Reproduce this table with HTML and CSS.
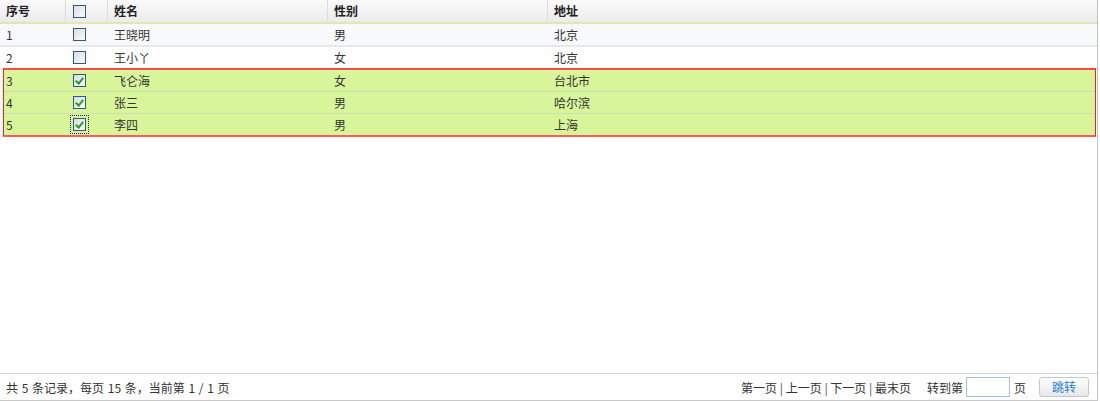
FILE: index.html
```html
<!DOCTYPE html>
<html lang="zh-CN">
<head>
<meta charset="utf-8">
<title>列表</title>
<link rel="stylesheet" href="styles.css">
</head>
<body>
<div class="panel">
  <div class="grid">
    <div class="row head">
      <div class="cell">序号</div>
      <div class="cell cb-cell"><span class="cb"></span></div>
      <div class="cell">姓名</div>
      <div class="cell">性别</div>
      <div class="cell">地址</div>
    </div>
    <div class="row odd">
      <div class="cell">1</div>
      <div class="cell cb-cell"><span class="cb"></span></div>
      <div class="cell">王晓明</div>
      <div class="cell">男</div>
      <div class="cell">北京</div>
    </div>
    <div class="row even">
      <div class="cell">2</div>
      <div class="cell cb-cell"><span class="cb"></span></div>
      <div class="cell">王小丫</div>
      <div class="cell">女</div>
      <div class="cell">北京</div>
    </div>
    <div class="selected">
      <div class="row sel">
        <div class="cell">3</div>
        <div class="cell cb-cell"><span class="cb checked"></span></div>
        <div class="cell">飞仑海</div>
        <div class="cell">女</div>
        <div class="cell">台北市</div>
      </div>
      <div class="row sel">
        <div class="cell">4</div>
        <div class="cell cb-cell"><span class="cb checked"></span></div>
        <div class="cell">张三</div>
        <div class="cell">男</div>
        <div class="cell">哈尔滨</div>
      </div>
      <div class="row sel last">
        <div class="cell">5</div>
        <div class="cell cb-cell"><span class="focus"><span class="cb checked"></span></span></div>
        <div class="cell">李四</div>
        <div class="cell">男</div>
        <div class="cell">上海</div>
      </div>
    </div>
  </div>
  <div class="footer">
    <div class="info">共 5 条记录，每页 15 条，当前第 1 / 1 页</div>
    <div class="pager">
      <span class="links">第一页 <span class="sep">|</span> 上一页 <span class="sep">|</span> 下一页 <span class="sep">|</span> 最末页</span>
      <span class="goto">转到第</span>
      <span class="input"></span>
      <span class="unit">页</span>
      <span class="btn">跳转</span>
    </div>
  </div>
</div>
</body>
</html>
```

FILE: styles.css
```css
html, body {
  margin: 0;
  padding: 0;
  background: #fff;
}
body {
  font-family: "Noto Sans CJK SC", "DejaVu Sans", sans-serif;
  font-size: 12px;
  color: #333;
}
.panel {
  width: 1097px;
  height: 400px;
  border-right: 1px solid #c4c4c4;
  border-bottom: 1px solid #c8c8c8;
  display: flex;
  flex-direction: column;
  justify-content: space-between;
}
.grid {
  display: flex;
  flex-direction: column;
}
.row {
  display: grid;
  grid-template-columns: 66px 42px 220px 220px 1fr;
  height: 21px;
  align-items: center;
  border-bottom: 1px solid #e4e6ea;
}
.row .cell {
  padding-left: 6px;
  line-height: 21px;
  height: 21px;
  white-space: nowrap;
}
.head {
  height: 22px;
  background: linear-gradient(#fafafa, #ebebeb);
  border-bottom: 2px solid #e2e6b4;
  font-weight: bold;
  color: #222;
}
.head .cell {
  border-right: 1px solid #dcdcdc;
  height: 22px;
  line-height: 22px;
}
.head .cell:last-child {
  border-right: none;
}
.odd {
  background: #f8f9fb;
  border-bottom: 2px solid #e6e8ec;
}
.even {
  border-bottom: none;
}
.cb-cell {
  display: flex;
  align-items: center;
}
.row .cb-cell {
  padding-left: 7px;
}
.cb {
  display: block;
  width: 11px;
  height: 11px;
  border: 1px solid #2c5a8a;
  background: linear-gradient(135deg, #dcdcdc, #fbfbfb);
  position: relative;
}
.cb.checked::after {
  content: "";
  position: absolute;
  left: 3px;
  top: 1px;
  width: 3px;
  height: 6px;
  border-right: 2px solid #22a022;
  border-bottom: 2px solid #22a022;
  transform: rotate(40deg);
}
.focus {
  display: block;
  padding: 2px;
  margin-left: -3px;
  border: 1px dotted #223;
}
.selected {
  margin-left: 3px;
  width: 1091px;
  border: 1px solid #ff1a1a;
  border-top: 2px solid #ff4a4a;
  border-bottom: 2px solid #ff5a5a;
}
.row.sel {
  grid-template-columns: 62px 42px 220px 220px 1fr;
  background: #d8f59a;
  border-bottom: 1px solid #cfdcb8;
}
.row.sel .cell:first-child {
  padding-left: 2px;
}
.row.sel.last {
  border-bottom: none;
}
.footer {
  height: 26px;
  border-top: 1px solid #d8d8d8;
  display: flex;
  align-items: center;
  justify-content: space-between;
  padding: 0 8px 0 6px;
}
.info {
  word-spacing: 1px;
}
.pager {
  display: flex;
  align-items: center;
}
.links {
  margin-right: 16px;
}
.sep {
  color: #555;
}
.input {
  display: block;
  width: 42px;
  height: 18px;
  margin-left: 3px;
  border: 1px solid #a9c2da;
  background: #fff;
}
.unit {
  margin-left: 4px;
}
.btn {
  display: block;
  margin-left: 13px;
  width: 48px;
  height: 18px;
  line-height: 18px;
  text-align: center;
  color: #1f7ad2;
  border: 1px solid #c4c8cc;
  border-radius: 3px;
  background: linear-gradient(#ffffff, #e6e8ea);
}
```
